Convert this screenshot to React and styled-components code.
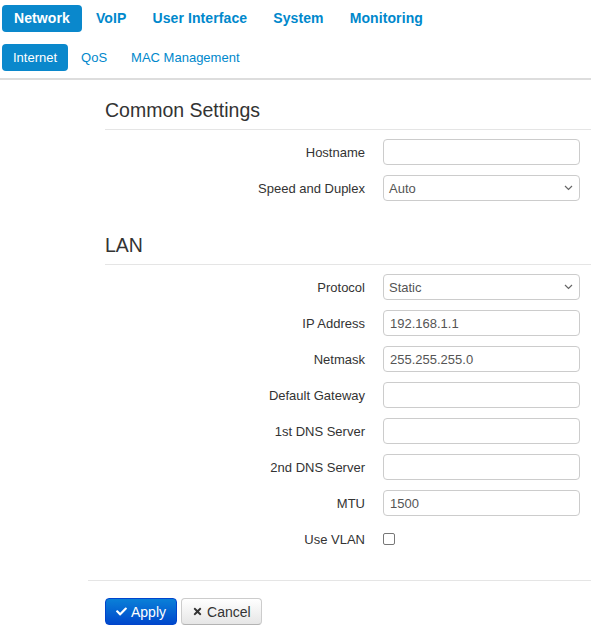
import React from "react";
import styled, { createGlobalStyle } from "styled-components";
import { FaCheck, FaTimes } from "react-icons/fa";

const GlobalStyle = createGlobalStyle`
  html, body {
    margin: 0;
    padding: 0;
    background: #fff;
  }
  body {
    font-family: "Liberation Sans", Arial, sans-serif;
    font-size: 13px;
    color: #333;
  }
`;

const mainTabs = ["Network", "VoIP", "User Interface", "System", "Monitoring"];
const subTabs = ["Internet", "QoS", "MAC Management"];

const commonRows = [
  { label: "Hostname", type: "text", value: "" },
  { label: "Speed and Duplex", type: "select", value: "Auto" },
];

const lanRows = [
  { label: "Protocol", type: "select", value: "Static" },
  { label: "IP Address", type: "text", value: "192.168.1.1" },
  { label: "Netmask", type: "text", value: "255.255.255.0" },
  { label: "Default Gateway", type: "text", value: "" },
  { label: "1st DNS Server", type: "text", value: "" },
  { label: "2nd DNS Server", type: "text", value: "" },
  { label: "MTU", type: "text", value: "1500" },
  { label: "Use VLAN", type: "checkbox" },
];

const Chevron = () => (
  <svg width="9" height="6" viewBox="0 0 9 6">
    <path d="M1 1 L4.5 4.5 L8 1" fill="none" stroke="#666" strokeWidth="1.2" />
  </svg>
);

const Field = ({ row }) => {
  if (row.type === "select") {
    return (
      <SelectBox>
        <span>{row.value}</span>
        <Chevron />
      </SelectBox>
    );
  }
  if (row.type === "checkbox") {
    return (
      <CheckCell>
        <CheckBox />
      </CheckCell>
    );
  }
  return <TextInput defaultValue={row.value} />;
};

const Section = ({ title, rows }) => (
  <SectionBox>
    <SectionTitle>{title}</SectionTitle>
    <Rows>
      {rows.map((row) => (
        <Row key={row.label}>
          <Label>{row.label}</Label>
          <Field row={row} />
        </Row>
      ))}
    </Rows>
  </SectionBox>
);

const App = () => {
  return (
    <>
      <GlobalStyle />
      <Header>
        <MainNav>
          {mainTabs.map((t, i) => (
            <MainTab key={t} active={i === 0}>
              {t}
            </MainTab>
          ))}
        </MainNav>
        <SubNav>
          {subTabs.map((t, i) => (
            <SubTab key={t} active={i === 0}>
              {t}
            </SubTab>
          ))}
        </SubNav>
      </Header>
      <Content>
        <Section title="Common Settings" rows={commonRows} />
        <Section title="LAN" rows={lanRows} />
        <Actions>
          <PrimaryButton>
            <FaCheck size={11} />
            Apply
          </PrimaryButton>
          <DefaultButton>
            <FaTimes size={11} />
            Cancel
          </DefaultButton>
        </Actions>
      </Content>
    </>
  );
};

const Header = styled.div`
  border-bottom: 2px solid #ddd;
  padding: 5px 0 7px 2px;
`;

const MainNav = styled.div`
  display: flex;
  gap: 2px;
`;

const MainTab = styled.a`
  display: block;
  height: 27px;
  line-height: 27px;
  padding: 0 12px;
  border-radius: 4px;
  font-size: 14px;
  font-weight: bold;
  letter-spacing: 0.1px;
  color: ${(p) => (p.active ? "#fff" : "#0088cc")};
  background: ${(p) => (p.active ? "#0a88cc" : "transparent")};
  cursor: pointer;
`;

const SubNav = styled.div`
  display: flex;
  gap: 2px;
  margin-top: 12px;
`;

const SubTab = styled.a`
  display: block;
  height: 27px;
  line-height: 27px;
  padding: 0 11px;
  border-radius: 4px;
  font-size: 13px;
  color: ${(p) => (p.active ? "#fff" : "#0088cc")};
  background: ${(p) => (p.active ? "#0a88cc" : "transparent")};
  cursor: pointer;
`;

const Content = styled.div`
  margin-left: 88px;
`;

const SectionBox = styled.div`
  padding-top: 18px;
  & + & {
    padding-top: 32px;
  }
`;

const SectionTitle = styled.h2`
  margin: 0 0 0 17px;
  padding-bottom: 7px;
  border-bottom: 1px solid #e5e5e5;
  font-size: 19.5px;
  font-weight: normal;
  line-height: 24px;
  color: #333;
`;

const Rows = styled.div`
  display: flex;
  flex-direction: column;
  gap: 10px;
  padding-top: 9px;
`;

const Row = styled.div`
  display: grid;
  grid-template-columns: 277px 197px;
  column-gap: 18px;
  align-items: center;
`;

const Label = styled.label`
  text-align: right;
  font-size: 13px;
  color: #333;
`;

const TextInput = styled.input`
  box-sizing: border-box;
  width: 197px;
  height: 26px;
  padding: 0 6px;
  border: 1px solid #ccc;
  border-radius: 4px;
  font-family: "Liberation Sans", Arial, sans-serif;
  font-size: 13px;
  color: #555;
  outline: none;
`;

const SelectBox = styled.div`
  box-sizing: border-box;
  display: flex;
  align-items: center;
  justify-content: space-between;
  width: 197px;
  height: 26px;
  padding: 0 6px 0 5px;
  border: 1px solid #ccc;
  border-radius: 4px;
  font-size: 13px;
  color: #555;
`;

const CheckCell = styled.div`
  height: 26px;
  display: flex;
  align-items: center;
`;

const CheckBox = styled.span`
  display: block;
  width: 10px;
  height: 10px;
  border: 1px solid #777;
  border-radius: 2px;
`;

const Actions = styled.div`
  display: flex;
  gap: 4px;
  margin-top: 28px;
  padding: 17px 0 0 17px;
  border-top: 1px solid #e5e5e5;
`;

const ButtonBase = styled.button`
  display: flex;
  align-items: center;
  gap: 4px;
  box-sizing: border-box;
  height: 27px;
  padding: 0 10px;
  border-radius: 4px;
  font-family: "Liberation Sans", Arial, sans-serif;
  font-size: 14px;
  cursor: pointer;
`;

const PrimaryButton = styled(ButtonBase)`
  color: #fff;
  border: 1px solid #0044cc;
  background: linear-gradient(to bottom, #0a80d8, #0048cc);
`;

const DefaultButton = styled(ButtonBase)`
  color: #333;
  border: 1px solid #ccc;
  border-bottom-color: #b3b3b3;
  background: linear-gradient(to bottom, #ffffff, #e6e6e6);
`;

export default App;
